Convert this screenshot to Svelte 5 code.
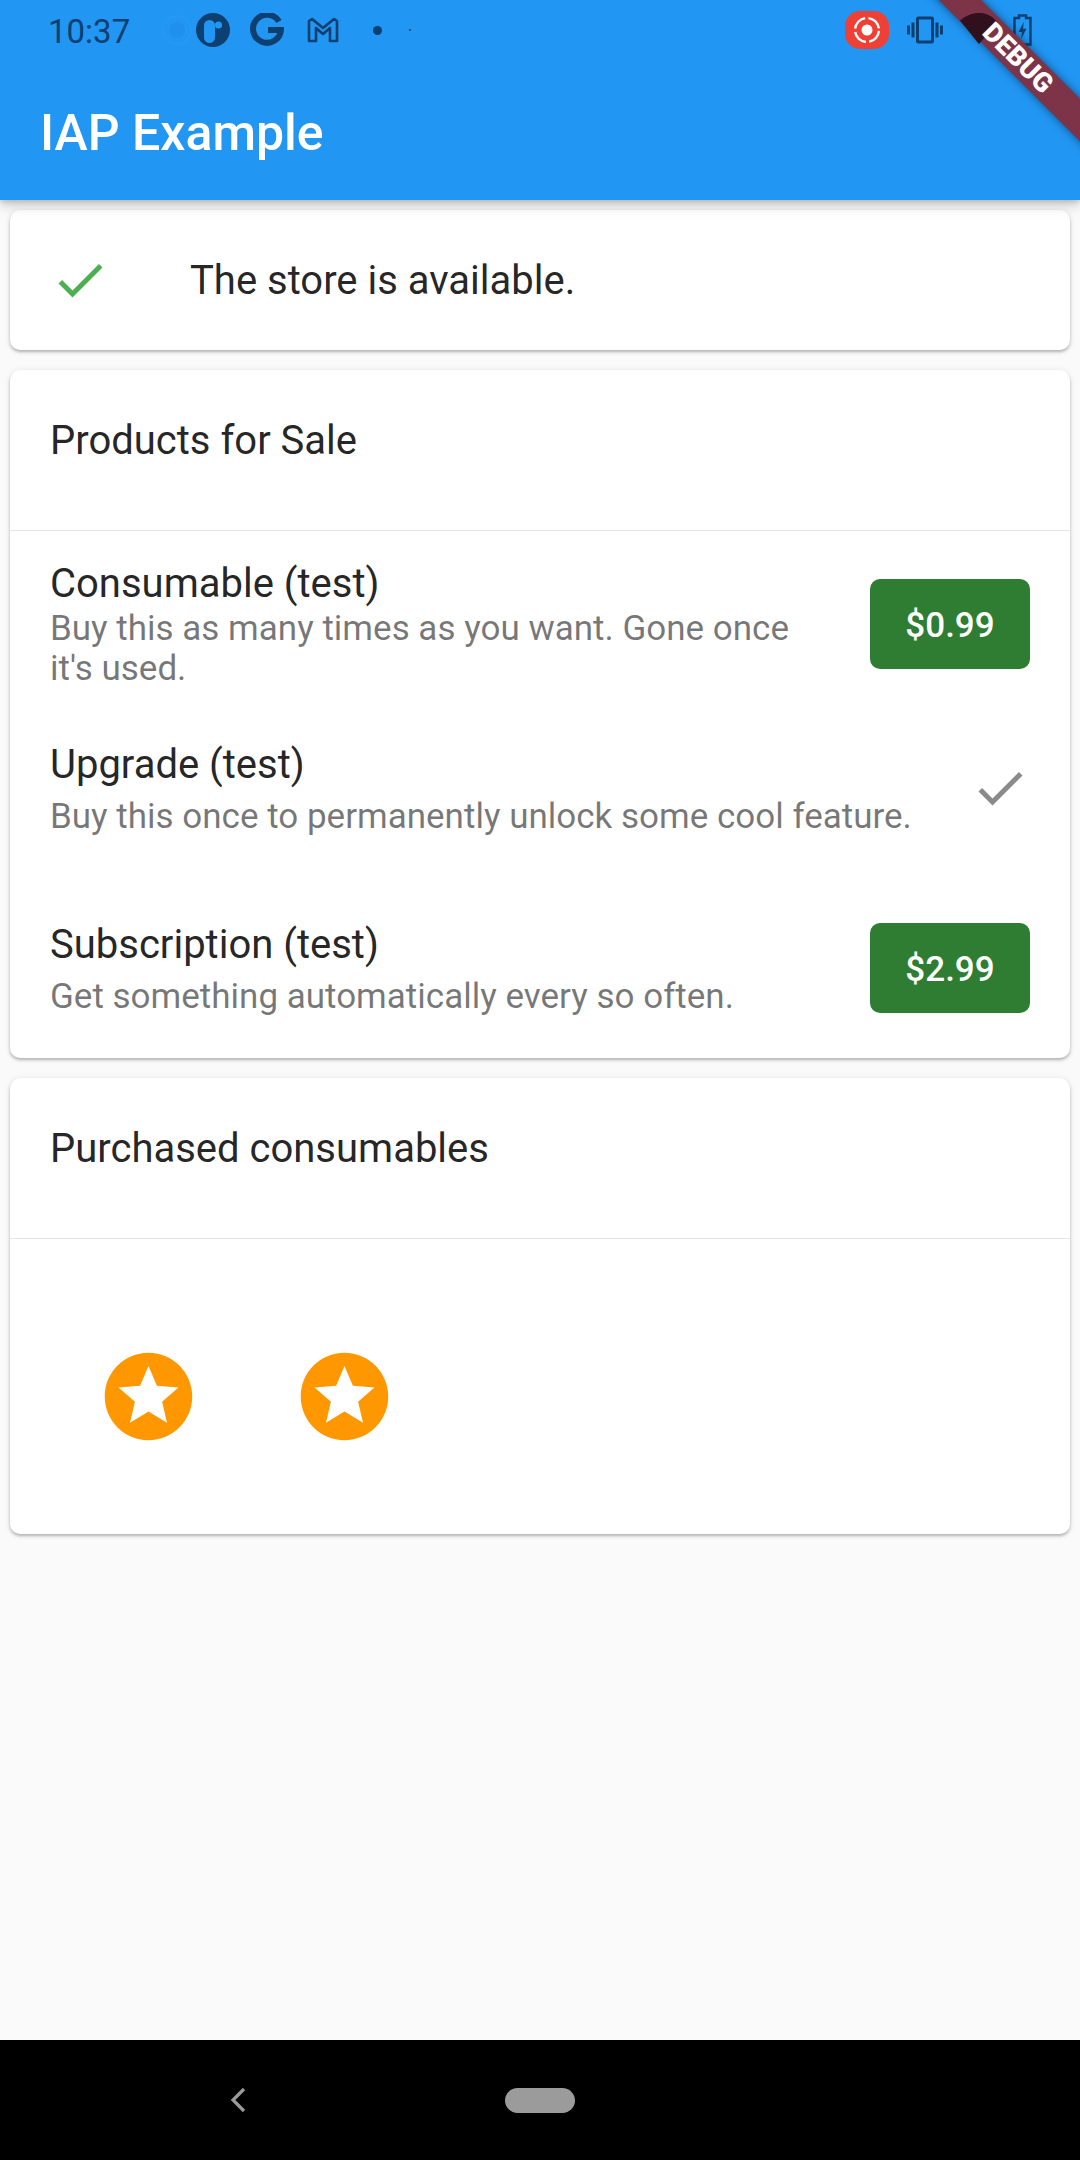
<script>
  const products = [
    { title: 'Consumable (test)', desc: "Buy this as many times as you want. Gone once it's used.", price: '$0.99', tall: true },
    { title: 'Upgrade (test)', desc: 'Buy this once to permanently unlock some cool feature.', owned: true },
    { title: 'Subscription (test)', desc: 'Get something automatically every so often.', price: '$2.99' }
  ];
  const consumables = [1, 2];
  const CHECK = 'M9 16.17L4.83 12l-1.42 1.41L9 19 21 7l-1.41-1.41z';
  const STARS = 'M11.99 2C6.47 2 2 6.48 2 12s4.47 10 9.99 10C17.52 22 22 17.52 22 12S17.52 2 11.99 2zm4.24 16L12 15.45 7.77 18l1.12-4.81-3.73-3.23 4.92-.42L12 5l1.92 4.53 4.92.42-3.73 3.23L16.23 18z';
</script>

<div class="screen">
  <header class="appbar">
    <div class="status">
      <span class="time">10:37</span>
      <div class="notifs">
        <svg class="faint" viewBox="0 0 30 30" width="30" height="30"><circle cx="15" cy="15" r="8" fill="#1f90ee" /><circle cx="15" cy="15" r="14" fill="none" stroke="#289af5" stroke-width="1.5" /></svg>
        <svg viewBox="0 0 34 34" width="34" height="34"><circle cx="17" cy="17" r="17" fill="#0d3f70" /><rect x="8" y="7" width="11" height="23" rx="5.5" fill="#2196f3" /><circle cx="22.5" cy="12" r="3.6" fill="#2196f3" /></svg>
        <svg class="g" viewBox="0 0 34 34" width="34" height="34"><path d="M29 8.5A14 14 0 1 0 31 17H18" fill="none" stroke="#0d3f70" stroke-width="6" /></svg>
        <svg viewBox="0 0 32 26" width="32" height="26"><path d="M2 24V4l3-2 11 9 11-9 3 2v20h-7V11l-7 6-7-6v13z" fill="none" stroke="#0d3f70" stroke-width="2.6" stroke-linejoin="round" /></svg>
        <span class="dot"></span>
        <span class="dot tiny"></span>
      </div>
      <div class="sys">
        <svg class="rec" viewBox="0 0 44 38" width="44" height="38"><rect width="44" height="38" rx="15" fill="#ee4035" /><circle cx="22" cy="19" r="5.5" fill="#fff" /><circle cx="22" cy="19" r="12" fill="none" stroke="#fff" stroke-width="2.4" stroke-dasharray="15.5 3.4" stroke-dashoffset="-1" /></svg>
        <svg viewBox="0 0 24 24" width="36" height="36" preserveAspectRatio="none"><path fill="#0d3f70" d="M0 15h2V9H0v6zm3 2h2V7H3v10zm19-8v6h2V9h-2zm-3 8h2V7h-2v10zM16.5 3h-9C6.67 3 6 3.67 6 4.5v15c0 .83.67 1.5 1.5 1.5h9c.83 0 1.5-.67 1.5-1.5v-15c0-.83-.67-1.5-1.5-1.5zM16 19H8V5h8v14z" /></svg>
        <span class="wifi-slot"></span>
        <svg viewBox="0 0 19 32" width="19" height="32"><path d="M6 1.5h7V4h4.5v26.5H1.5V4H6z" fill="none" stroke="#0d3f70" stroke-width="2.4" /><path d="M10.8 8L5.5 18h3.4l-.8 7 5.4-10.2H10z" fill="#0d3f70" /></svg>
      </div>
    </div>
    <div class="toolbar">IAP Example</div>
  </header>

  <main class="content">
    <section class="card">
      <div class="tile status-tile">
        <svg class="leading" viewBox="0 0 24 24" width="60" height="60"><path d={CHECK} fill="#4caf50" /></svg>
        <span class="title">The store is available.</span>
      </div>
    </section>

    <section class="card">
      <div class="tile"><span class="title">Products for Sale</span></div>
      <div class="divider"></div>
      {#each products as p}
        <div class="product" class:tall={p.tall}>
          <div class="info">
            <div class="title">{p.title}</div>
            <div class="desc">{p.desc}</div>
          </div>
          {#if p.owned}
            <svg viewBox="0 0 24 24" width="60" height="60"><path d={CHECK} fill="#8a8a8a" /></svg>
          {:else}
            <span class="buy">{p.price}</span>
          {/if}
        </div>
      {/each}
    </section>

    <section class="card">
      <div class="tile"><span class="title">Purchased consumables</span></div>
      <div class="divider"></div>
      <div class="grid">
        {#each consumables as c (c)}
          <div class="cell">
            <svg viewBox="0 0 24 24" width="105" height="105"><path d={STARS} fill="#ff9800" /></svg>
          </div>
        {/each}
      </div>
    </section>
  </main>

  <nav class="navbar">
    <svg class="back" viewBox="0 0 16 26" width="16" height="26"><path d="M14 2L3 13l11 11" fill="none" stroke="#9a9a9a" stroke-width="3.2" /></svg>
    <span class="pill"></span>
  </nav>

  <!-- debug ribbon sits over everything in the top corner -->
  <div class="ribbon-clip">
    <div class="ribbon"></div>
    <svg class="wifi" viewBox="0 0 38 31" width="38" height="31"><path d="M0 7.5C6 2.5 12 0 19 0s13 2.5 19 10L19 31z" fill="#2f101c" /></svg>
    <div class="ribbon-text">DEBUG</div>
  </div>
</div>

<style>
  :global(body) {
    margin: 0;
    background: #fafafa;
  }

  .screen {
    position: relative;
    width: 1080px;
    height: 2160px;
    display: flex;
    flex-direction: column;
    overflow: hidden;
    background: #fafafa;
    font-family: Roboto, sans-serif;
    color: rgba(0, 0, 0, 0.87);
  }

  .appbar {
    height: 200px;
    flex: none;
    background: #2196f3;
    color: #fff;
    box-shadow: 0 5px 12px rgba(0, 0, 0, 0.2), 0 2px 5px rgba(0, 0, 0, 0.12);
    position: relative;
    z-index: 1;
  }

  .status {
    height: 60px;
    display: flex;
    align-items: center;
    padding: 0 48px;
    box-sizing: border-box;
    color: #0d3f70;
  }
  .time {
    font-size: 33px;
    width: 114px;
    line-height: 1;
    margin-top: 2px;
    flex: none;
  }
  .notifs {
    display: flex;
    align-items: center;
    gap: 20px;
    flex: 1;
  }
  .notifs .faint { margin-right: -16px; }
  .notifs .g { margin-right: 3px; }
  .dot {
    width: 9px;
    height: 9px;
    border-radius: 50%;
    background: #0d3f70;
    margin-left: 14px;
  }
  .dot.tiny {
    width: 2px;
    height: 2px;
    margin-left: 7px;
  }
  .sys {
    display: flex;
    align-items: center;
    gap: 16px;
  }
  .sys .rec { margin-right: 2px; }
  .wifi-slot { width: 38px; }

  .toolbar {
    height: 140px;
    box-sizing: border-box;
    display: flex;
    align-items: center;
    padding: 5px 0 0 40px;
    font-size: 50px;
    font-weight: 500;
  }

  .content { flex: 1; padding: 10px; display: flex; flex-direction: column; gap: 20px; }

  .card {
    background: #fff;
    border-radius: 10px;
    box-shadow: 0 2px 3px rgba(0, 0, 0, 0.24), 0 1px 6px rgba(0, 0, 0, 0.1);
  }

  .tile {
    height: 140px;
    display: flex;
    align-items: center;
    padding: 0 40px;
  }
  .status-tile .leading { margin-right: 80px; flex: none; }

  .title {
    font-size: 40px;
    line-height: 47px;
  }

  .divider {
    height: 1px;
    margin: 20px 0 19px;
    background: #e4e4e4;
  }

  .product {
    height: 180px;
    padding: 0 40px;
    display: flex;
    align-items: center;
    justify-content: space-between;
  }
  .product.tall { height: 148px; }

  .info { width: 760px; flex: none; padding-top: 1px; }
  .desc {
    font-size: 35px;
    line-height: 40px;
    color: rgba(0, 0, 0, 0.54);
    margin-top: 9px;
    white-space: nowrap;
  }
  .tall .desc {
    margin-top: 2px;
    white-space: normal;
  }

  .buy {
    width: 160px;
    height: 90px;
    padding-top: 2px;
    box-sizing: border-box;
    display: flex;
    align-items: center;
    justify-content: center;
    border-radius: 10px;
    background: #2e7d32;
    color: #fff;
    font-size: 35px;
    font-weight: 500;
  }

  .grid {
    display: grid;
    grid-template-columns: repeat(5, 196px);
    padding: 40px;
  }
  .cell {
    height: 196px;
    display: flex;
    align-items: center;
    justify-content: center;
  }

  .navbar {
    height: 120px;
    flex: none;
    background: #000;
    display: flex;
    align-items: center;
    padding-left: 230px;
  }
  .pill {
    width: 70px;
    height: 25px;
    border-radius: 13px;
    background: #9b9b9b;
    margin-left: 259px;
  }

  .ribbon-clip {
    position: absolute;
    top: 0;
    right: 0;
    width: 200px;
    height: 200px;
    overflow: hidden;
    z-index: 2;
  }
  .ribbon, .ribbon-text {
    position: absolute;
    left: -62px;
    top: 43px;
    width: 400px;
    height: 30px;
    transform: rotate(45deg);
  }
  .ribbon {
    background: #7d3348;
    box-shadow: 0 0 8px rgba(0, 0, 0, 0.5);
  }
  .ribbon-text {
    line-height: 30px;
    text-align: center;
    color: #fff;
    font-size: 27px;
    font-weight: 900;
  }
  .wifi {
    position: absolute;
    left: 80px;
    top: 13px;
  }
</style>
